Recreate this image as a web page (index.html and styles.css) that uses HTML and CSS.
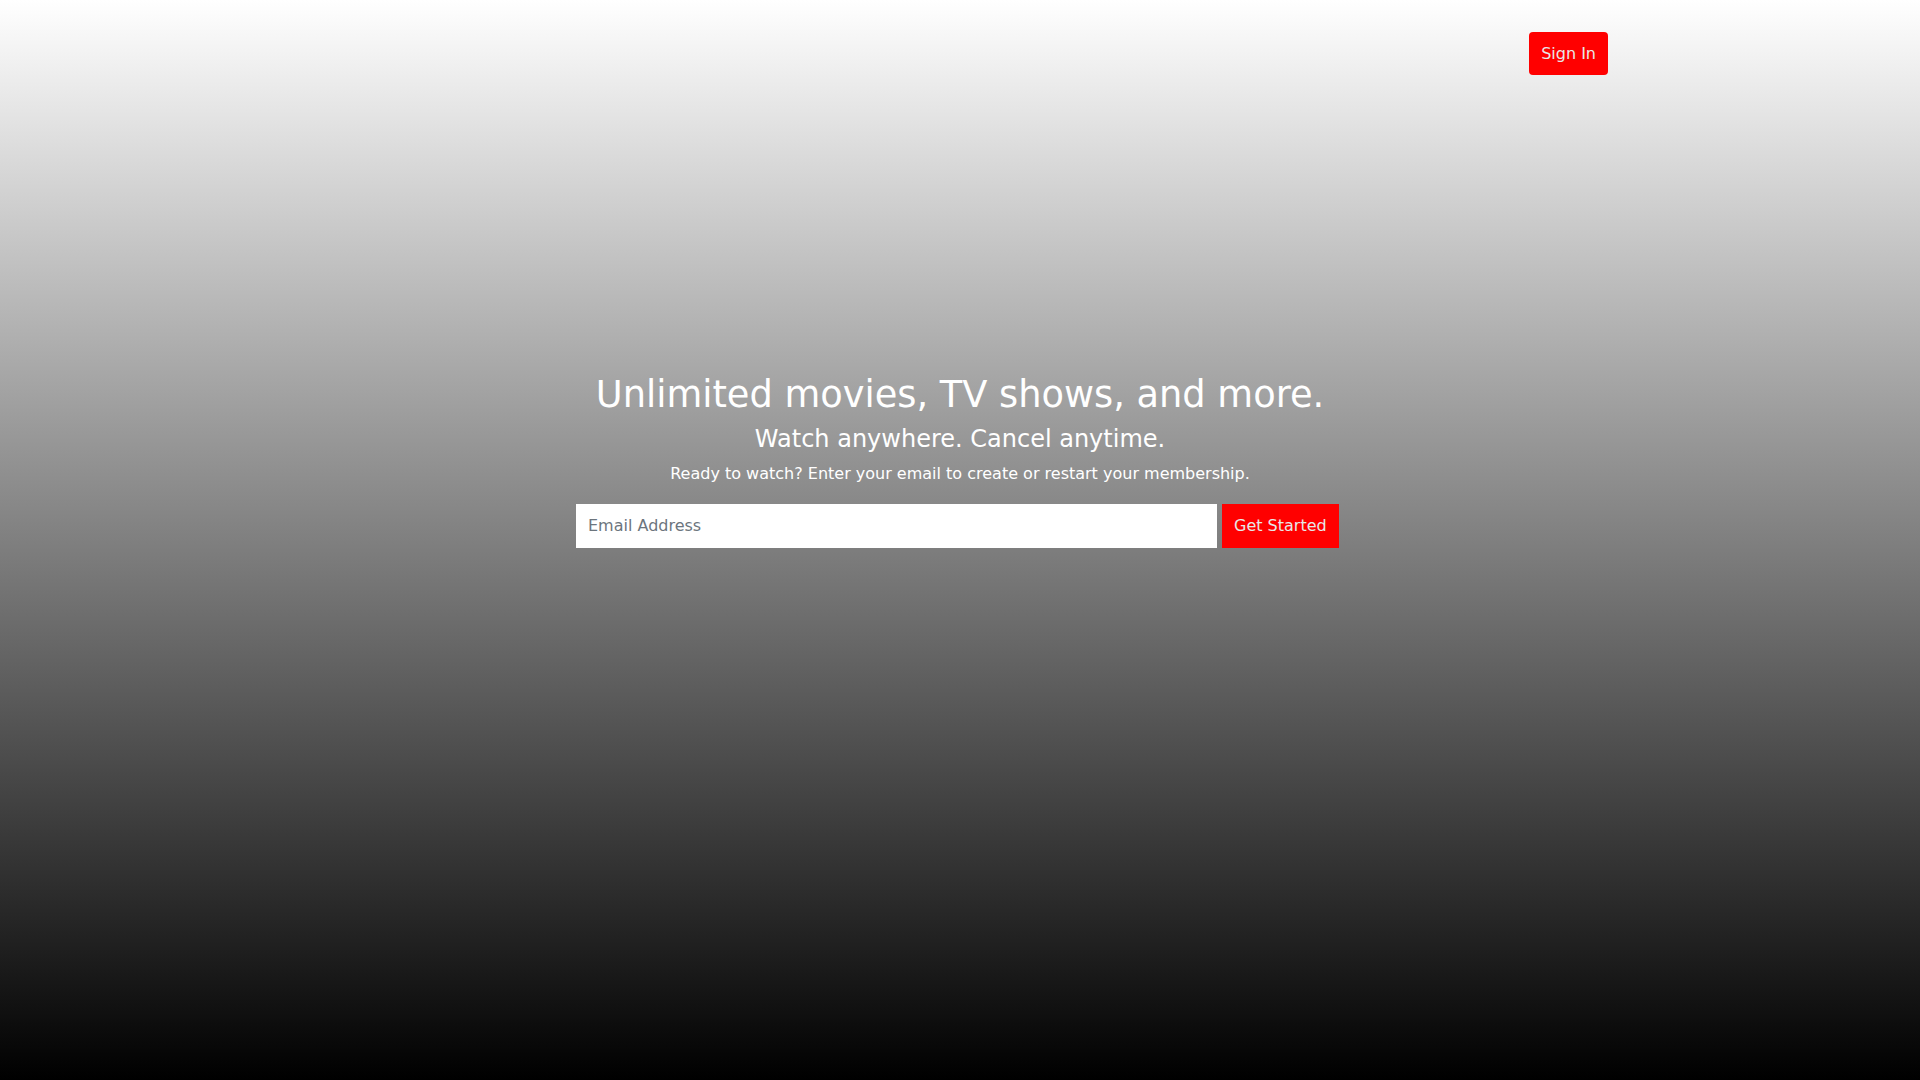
FILE: index.html
```html
<!DOCTYPE html>
<html lang="en">

<head>
    <meta charset="UTF-8">
    <meta name="viewport" content="width=device-width, initial-scale=1.0">
    <title>Netflix Clone</title>
    <link rel="stylesheet" href="styles.css">
</head>

<body>
    <header>
        <nav class="navbar">
            <a href="#" class="logo"></a>
            <a href="#" class="btn btn-red sign-in">Sign In</a>
        </nav>
    </header>

    <main>
        <section class="hero">
            <h1>Unlimited movies, TV shows, and more.</h1>
            <h4>Watch anywhere. Cancel anytime.</h4>
            <p>Ready to watch? Enter your email to create or restart your membership.</p>
            <form class="signup-form" action="#">
                <input type="email" class="email-input" placeholder="Email Address">
                <button type="submit" class="btn btn-red get-started">Get Started</button>
            </form>
        </section>
    </main>
</body>

</html>
```

FILE: styles.css
```css
/* Reset */
* {
    margin: 0;
    padding: 0;
    box-sizing: border-box;
}

html,
body {
    height: 100%;
}

body {
    font-family: "DejaVu Sans", sans-serif;
    font-size: 16px;
    line-height: 1.5;
    color: #fff;
    background: linear-gradient(to bottom, #fff, #000);
    min-height: 100vh;
}

/* Header */
.navbar {
    max-width: 1320px;
    margin: 0 auto;
    padding: 32px 12px 0;
    display: flex;
    justify-content: space-between;
    align-items: center;
}

.btn {
    display: inline-block;
    font-family: inherit;
    font-size: 16px;
    line-height: 24px;
    text-decoration: none;
    border: none;
    cursor: pointer;
}

.btn-red {
    background-color: #f00;
    color: #e8e8e8;
}

.sign-in {
    padding: 9.5px 12px;
    border-radius: 4px;
}

/* Hero */
.hero {
    padding-top: 298px;
    text-align: center;
}

.hero h1 {
    font-size: 36.75px;
    font-weight: 400;
    line-height: 1.2;
    margin-bottom: 8px;
}

.hero h4 {
    font-size: 24px;
    font-weight: 400;
    line-height: 1.2;
    margin-bottom: 8px;
}

.hero p {
    margin-bottom: 18px;
}

.signup-form {
    width: 768px;
    margin: 0 auto;
    display: flex;
    gap: 5px;
}

.email-input {
    width: 641px;
    height: 44px;
    padding: 0 12px;
    border: none;
    border-radius: 0;
    font-family: inherit;
    font-size: 16px;
    color: #212529;
    background-color: #fff;
    outline: none;
}

.email-input::placeholder {
    color: #6c757d;
}

.get-started {
    height: 44px;
    padding: 0 12px;
    border-radius: 0;
}
```
